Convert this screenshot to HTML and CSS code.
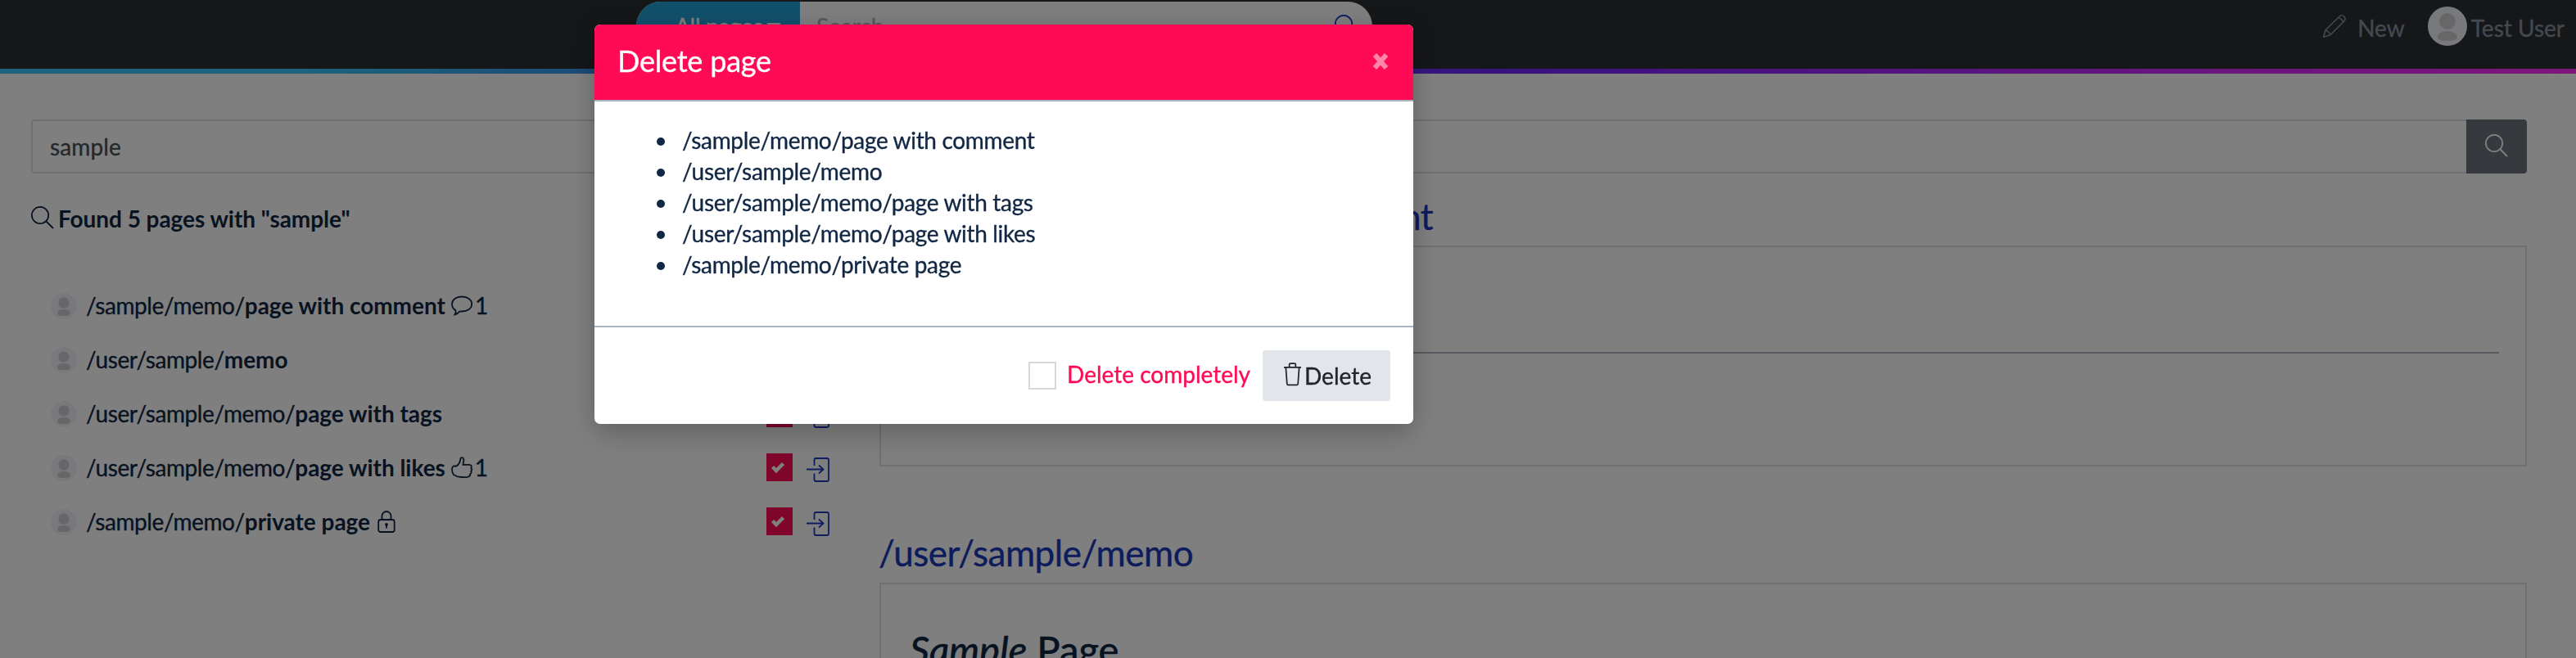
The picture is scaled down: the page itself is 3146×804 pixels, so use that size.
FILE: index.html
```html
<!DOCTYPE html>
<html lang="en">
<head>
<meta charset="utf-8">
<title>Search</title>
<link rel="stylesheet" href="styles.css">
</head>
<body>
<svg class="defs" aria-hidden="true">
  <symbol id="search" viewBox="0 0 28 28"><circle cx="11" cy="11" r="10.2"/><path d="M18.500 18.500 27 27"/></symbol>
  <symbol id="avatar" viewBox="0 0 48 48"><circle class="avatar-bg" cx="24" cy="24" r="24"/><circle class="avatar-fg" cx="24" cy="18" r="10"/><path class="avatar-fg" d="M12 37c0-4 5-7 12-7s12 3 12 7-5 5-12 5-12-1-12-5z"/></symbol>
  <symbol id="pencil" viewBox="0 0 28 28"><path d="M.8 27.200 2.800 19 20 2.200c2-2 4.200-1.600 5.700-.1s1.900 4-.1 6L8.800 24.800zM2.800 19q4.700 1.100 6 5.800M18.600 3.600q5 1.200 5.800 5.700"/></symbol>
  <symbol id="comment" viewBox="0 0 26 26"><path d="M4.500 24.300q1.500-2.300.9-5.100C2.500 17.500 1 14.500 1 11.500 1 6 6 2.500 13 2.500S25.200 6 25.200 11.500 20 20.500 13 20.500q-1.800 0-3 .2-1.800 2.800-5.500 3.600z"/></symbol>
  <symbol id="like" viewBox="0 0 26 26"><path d="M3 11.500h3.500C9.500 9.500 11 6 11.500 2.500c.3-2.300 3.600-1.800 3.800.8.200 2-.4 4.500-.8 6.500H22c2.500 0 3.500 2 2.300 4 1.200 1.200 1.100 2.900 0 3.800.7 1.500.1 2.800-1 3.500.2 2-1 3.200-3.300 3.700-3.500.6-7.500.4-10.500-.1C6.500 24.200 5 22.700 3 22.200 1.500 20 1 17.500 1 15.500s.5-3.200 2-4z"/></symbol>
  <symbol id="lock" viewBox="0 0 22 28"><rect x="1.200" y="12" width="19.500" height="15" rx="2.500"/><path d="M5.500 12V7.500a5.500 5.500 0 0 1 11 0V12M11 18v4.500"/><circle cx="11" cy="18" r="1"/></symbol>
  <symbol id="login" viewBox="0 0 28 30"><path d="M9.500 10V3q0-2 2-2H25q2 0 2 2v24q0 2-2 2H11.500q-2 0-2-2V19.500M0 14.500h20.500M15 9.500l5.500 5-5.500 5"/></symbol>
  <symbol id="trash" viewBox="0 0 24 30"><path d="M1 6h22M8 6V2.500Q8 1 9.500 1h5Q16 1 16 2.500V6M3.500 6 5 27q.2 1.500 1.500 1.500h11q1.300 0 1.500-1.500L20.500 6"/></symbol>
</svg>

<header class="navbar">
  <div class="nav-search">
    <span class="scope">All pages<i class="caret"></i></span>
    <span class="nav-placeholder">Search ...</span>
    <svg class="nav-search-icon"><use href="#search"/></svg>
  </div>
  <div class="nav-right">
    <svg class="nav-pencil"><use href="#pencil"/></svg>
    <span class="nav-new">New</span>
    <svg class="nav-avatar"><use href="#avatar"/></svg>
    <span class="nav-user">Test User</span>
  </div>
</header>
<div class="grad"></div>

<div class="searchbar">
  <div class="search-input">sample</div>
  <div class="search-btn"><svg><use href="#search"/></svg></div>
</div>

<main class="result">
  <section class="list">
    <h2 class="found"><svg><use href="#search"/></svg>Found 5 pages with "sample"</h2>
    <ul class="pages">
      <li><svg class="face"><use href="#avatar"/></svg><span class="path">/sample/memo/<b>page with comment</b></span><svg class="meta"><use href="#comment"/></svg><span class="count">1</span><span class="check"></span><svg class="go"><use href="#login"/></svg></li>
      <li><svg class="face"><use href="#avatar"/></svg><span class="path">/user/sample/<b>memo</b></span><span class="check"></span><svg class="go"><use href="#login"/></svg></li>
      <li><svg class="face"><use href="#avatar"/></svg><span class="path">/user/sample/memo/<b>page with tags</b></span><span class="check"></span><svg class="go"><use href="#login"/></svg></li>
      <li><svg class="face"><use href="#avatar"/></svg><span class="path">/user/sample/memo/<b>page with likes</b></span><svg class="meta"><use href="#like"/></svg><span class="count">1</span><span class="check"><svg viewBox="0 0 16 14"><path d="M1.500 6.500l4.500 4.500L14.500 2.500"/></svg></span><svg class="go"><use href="#login"/></svg></li>
      <li><svg class="face"><use href="#avatar"/></svg><span class="path">/sample/memo/<b>private page</b></span><svg class="meta lock"><use href="#lock"/></svg><span class="check"><svg viewBox="0 0 16 14"><path d="M1.500 6.500l4.500 4.500L14.500 2.500"/></svg></span><svg class="go"><use href="#login"/></svg></li>
    </ul>
  </section>
  <section class="previews">
    <h2 class="page-title">/sample/memo/page with comment</h2>
    <article class="preview first"><hr></article>
    <h2 class="page-title">/user/sample/memo</h2>
    <article class="preview second"><h1><em>Sample</em> Page</h1></article>
  </section>
</main>

<div class="backdrop"></div>
<div class="modal">
  <div class="modal-header"><h5>Delete page</h5><svg class="close" viewBox="0 0 22 24"><path d="M4 4l14 16M18 4L4 20"/></svg></div>
  <div class="modal-body">
    <ul>
      <li>/sample/memo/page with comment</li>
      <li>/user/sample/memo</li>
      <li>/user/sample/memo/page with tags</li>
      <li>/user/sample/memo/page with likes</li>
      <li>/sample/memo/private page</li>
    </ul>
  </div>
  <div class="modal-footer">
    <span class="box"></span><span class="danger">Delete completely</span>
    <span class="btn"><svg><use href="#trash"/></svg>Delete</span>
  </div>
</div>
</body>
</html>
```
FILE: styles.css
```css
* { box-sizing: border-box; }
html, body { margin: 0; height: 804px; overflow: hidden; }
body { background: #fff; color: #112744; font: 28px/38px Lato, sans-serif; -webkit-text-stroke: .35px currentColor; }
h1, h2, h5, ul { margin: 0; padding: 0; }
b, .found { -webkit-text-stroke: 0; }
svg { fill: none; stroke: currentColor; stroke-width: 1.8; flex: none; overflow: visible; }
.defs { position: absolute; width: 0; height: 0; }
.avatar-bg { fill: #f0f3f8; stroke: none; }
.avatar-fg { fill: #cfcfcf; stroke: none; }

.navbar { height: 84px; background: #2d2f33; display: flex; justify-content: space-between; align-items: flex-start; padding: 2px 14px 0 777px; color: #84929f; }
.nav-search { width: 899px; height: 60px; border-radius: 30px; background: #fff; overflow: hidden; display: flex; align-items: center; }
.scope { width: 200px; height: 60px; background: #24a2d9; color: #fff; padding: 11px 0 0 47px; white-space: nowrap; display: flex; letter-spacing: -.3px; }
.caret { border: 9px solid transparent; border-top-color: #fff; border-bottom: 0; height: 9px; margin: 15px 0 0 5px; }
.nav-placeholder { padding-left: 20px; color: #adb5bd; flex: 1; }
.nav-search-icon { width: 28px; height: 28px; margin-right: 18px; color: #1a3bc0; }
.nav-right { display: flex; align-items: center; height: 60px; }
.nav-pencil { width: 28px; height: 28px; stroke-width: 1.500; }
.nav-new { margin: 3px 28px 0 14px; }
.nav-avatar { width: 48px; height: 48px; margin-right: 5px; }
.nav-user { margin-top: 3px; }
.grad { height: 6px; background: linear-gradient(90deg, #39c6fa 0%, #39c6fa 12%, #3a8ee8 25%, #7026ff 58%, #d02cff 85%, #ff2cf5 100%); }

.searchbar { display: flex; margin: 56px 60px 0 38px; height: 66px; }
.search-input { flex: 1; border: 2px solid #dedee8; border-right: 0; border-radius: 4px 0 0 4px; padding: 12px 21px; color: #495057; letter-spacing: .15px; }
.search-btn { width: 74px; background: #6c757d; border-radius: 0 4px 4px 0; color: #fff; padding: 18px 0 0 23px; line-height: 0; }
.search-btn svg { width: 28px; height: 28px; }

.result { display: flex; padding: 0 60px 0 38px; }
.list { width: 1036px; padding-top: 36px; }
.found { font-size: 28px; line-height: 38px; font-weight: 700; display: flex; gap: 5px; letter-spacing: -.05px; }
.found svg { width: 28px; height: 28px; margin-top: 4px; }
.pages { list-style: none; padding: 55px 61px 0 24px; }
.pages li { height: 66px; display: flex; align-items: center; }
.face { width: 32px; height: 32px; }
.path { margin: -2px 0 0 11px; letter-spacing: -.4px; }
.path b { letter-spacing: -.03px; }
.meta { width: 26px; height: 26px; margin: -2px 3px 0 7px; }
.count { margin-top: -2px; }
.lock { width: 22px; height: 28px; margin-left: 9px; }
.check { width: 32px; height: 34px; background: #ff0a54; margin: -2px 17px 0 auto; display: flex; justify-content: center; align-items: center; }
.check svg { width: 16px; height: 14px; color: #fff; stroke-width: 4.500; margin: 0 4px 0 0; }
.go { width: 28px; height: 30px; margin-top: 3px; color: #1a3bc0; }
.previews { flex: 1; }
.page-title { font-size: 44px; line-height: 54px; font-weight: 400; color: #1a38b8; letter-spacing: -.5px; margin-left: -1px; }
.previews .page-title:first-child { padding-top: 25px; }
.preview { border: 2px solid #dedee8; padding: 0 35px; }
.first { height: 270px; margin: 9px 0 78px; padding: 128px 32px 0; }
.first hr { border: 0; height: 2px; background: #aeb6be; margin: 0; }
.second { height: 92px; margin-top: 10px; padding-top: 52px; border-bottom: 0; overflow: hidden; }
.second h1 { font-size: 47px; line-height: 54px; font-weight: 500; }

.backdrop { position: fixed; inset: 0; background: rgba(0, 0, 0, .5); }
.modal { position: absolute; left: 726px; top: 30px; width: 1000px; height: 488px; background: #fff; border-radius: 7px; overflow: hidden; box-shadow: 0 16px 32px rgba(0, 0, 0, .15), 0 0 30px rgba(0, 0, 0, .12); display: flex; flex-direction: column; }
.modal-header { height: 94px; background: #ff0a54; border-bottom: 2px solid #a9b3c0; color: #fff; display: flex; justify-content: space-between; padding: 21px 29px 0 28px; }
.modal-header h5 { font-size: 36px; line-height: 46px; font-weight: 400; letter-spacing: -.2px; }
.close { width: 22px; height: 24px; stroke-width: 6; opacity: .5; margin-top: 12px; }
.modal-body { height: 274px; padding: 28px; }
.modal-body ul { list-style: none; padding-left: 48px; }
.modal-body li { display: flex; align-items: center; letter-spacing: -.33px; }
.modal-body li::before { content: ""; width: 10px; height: 10px; border-radius: 50%; background: currentColor; margin: 3px 21px 0 0; }
.modal-footer { height: 120px; border-top: 2px solid #a9b3c0; display: flex; align-items: center; justify-content: flex-end; padding-right: 28px; }
.box { width: 34px; height: 34px; border: 2px solid #d5d9dd; }
.danger { color: #ff0a54; margin: 0 15px 4px 13px; }
.btn { width: 156px; height: 62px; border-radius: 4px; background: #e2e6ea; color: #212529; display: flex; align-items: center; padding-left: 25px; gap: 3px; }
.btn svg { width: 23px; height: 31px; margin-top: -3px; }
```
